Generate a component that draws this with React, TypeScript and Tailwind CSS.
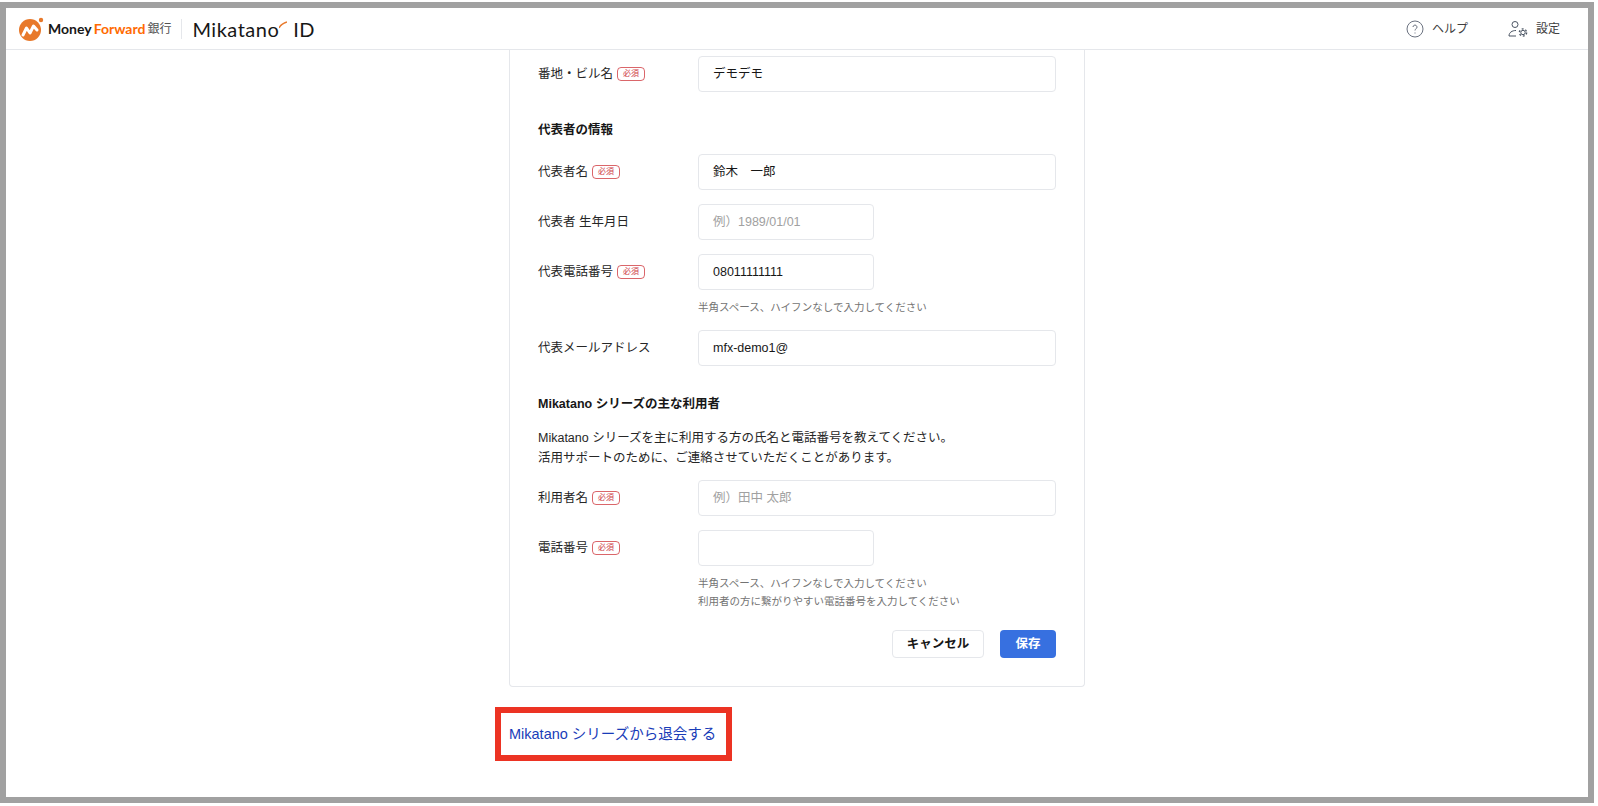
const F = { fontFamily: '"Liberation Sans", "Noto Sans CJK JP", sans-serif' };
const L = { fontFamily: "Lato, sans-serif" };

function Req() {
  return (
    <span className="ml-1 inline-flex h-3.5 w-7 items-center justify-center rounded-sm border border-red-700/60 text-[8px] leading-none text-red-700/80">
      必須
    </span>
  );
}

function Row({ label, req, value, placeholder, short, hint }: { label: string; req?: boolean; value?: string; placeholder?: string; short?: boolean; hint?: string[] }) {
  return (
    <div className="flex">
      <div className="flex h-9 w-40 shrink-0 items-center text-neutral-800">
        {label}
        {req && <Req />}
      </div>
      <div className="flex-1">
        <div className={`flex h-9 items-center rounded border border-gray-200 bg-white px-3.5 ${short ? "w-44" : "w-full"} ${value ? "text-neutral-900" : "text-neutral-400"}`}>
          {value || placeholder}
        </div>
        {hint && (
          <div className="mt-2 text-[10.5px] leading-4.5 text-neutral-500">
            {hint.map((h) => (
              <div key={h}>{h}</div>
            ))}
          </div>
        )}
      </div>
    </div>
  );
}

export default function App() {
  return (
    <div style={F} className="h-screen overflow-hidden bg-white pt-0.5 pr-1">
      <div className="flex h-[801px] flex-col overflow-hidden border-6 border-neutral-400 bg-white">
        <header className="flex h-10.5 shrink-0 items-center justify-between border-b border-gray-200 pr-7 pl-3">
          <div className="flex items-center">
            <svg width="26" height="26" viewBox="0 0 26 26">
              <circle cx="12" cy="14" r="11" fill="#e8792b" />
              <circle cx="23" cy="4" r="2.2" fill="#e8792b" />
              <path d="M5 19l3.5-7 3.5 5 3.5-7 3.5 4" fill="none" stroke="#fff" strokeWidth="3" strokeLinejoin="round" strokeLinecap="round" />
            </svg>
            <span className="ml-1 text-sm font-bold text-neutral-900" style={L}>Money</span>
            <span className="ml-0.5 text-sm font-bold text-orange-500" style={L}>Forward</span>
            <span className="ml-0.5 text-xs text-neutral-600">銀行</span>
            <span className="mx-2.5 h-5 w-px bg-gray-200" />
            <span className="text-xl tracking-wide text-neutral-900" style={L}>Mikatano</span>
            <svg width="8" height="8" viewBox="0 0 8 8" className="-mt-2">
              <path d="M0 7C2 3 5 2 8 1" fill="none" stroke="#e8792b" strokeWidth="1.6" />
            </svg>
            <span className="ml-1.5 text-xl tracking-wide text-neutral-900" style={L}>ID</span>
          </div>
          <div className="flex items-center gap-10 text-xs text-neutral-700">
            <div className="flex items-center gap-2">
              <svg width="18" height="18" viewBox="0 0 18 18" fill="none" stroke="#6b7280">
                <circle cx="9" cy="9" r="8" />
                <path d="M7 7a2 2 0 1 1 3 1.8c-.7.4-1 .8-1 1.7M9 12.5v1" />
              </svg>
              ヘルプ
            </div>
            <div className="flex items-center gap-2">
              <svg width="20" height="18" viewBox="0 0 20 18" fill="none" stroke="#4b5563">
                <circle cx="7" cy="4.5" r="3" />
                <path d="M1 16c0-3.5 3-5.5 7-5.5M1 16h7" />
                <circle cx="15" cy="12.5" r="3.6" strokeWidth="1.4" strokeDasharray="1.9 1.9" />
                <circle cx="15" cy="12.5" r="2.2" />
              </svg>
              設定
            </div>
          </div>
        </header>
        <main className="flex flex-1 flex-col items-center text-[12.5px]">
          <div className="w-144 rounded-b border border-t-0 border-gray-200 bg-white px-7 pt-1.5 pb-7">
            <div className="flex flex-col gap-3.5">
              <Row label="番地・ビル名" req value="デモデモ" />
              <div className="mt-3.5 leading-5 font-bold text-neutral-900">代表者の情報</div>
              <Row label="代表者名" req value="鈴木　一郎" />
              <Row label="代表者 生年月日" placeholder="例）1989/01/01" short />
              <Row label="代表電話番号" req value="08011111111" short hint={["半角スペース、ハイフンなしで入力してください"]} />
              <Row label="代表メールアドレス" value="mfx-demo1@" />
              <div className="mt-3.5 leading-5 font-bold text-neutral-900">Mikatano シリーズの主な利用者</div>
              <p className="-mb-0.5 leading-5 text-neutral-800">
                Mikatano シリーズを主に利用する方の氏名と電話番号を教えてください。
                <br />
                活用サポートのために、ご連絡させていただくことがあります。
              </p>
              <Row label="利用者名" req placeholder="例）田中 太郎" />
              <Row label="電話番号" req short hint={["半角スペース、ハイフンなしで入力してください", "利用者の方に繋がりやすい電話番号を入力してください"]} />
              <div className="mt-1.5 flex justify-end gap-4">
                <button className="h-7 w-23 rounded border border-gray-200 bg-white font-bold text-neutral-900">キャンセル</button>
                <button className="h-7 w-14 rounded bg-[#3770e0] font-bold text-white">保存</button>
              </div>
            </div>
          </div>
          <div className="mt-5 w-144 -translate-x-3.5">
            <div className="w-fit border-6 border-[#ec3323] py-3 pr-2.5 pl-2 text-[14.5px] leading-4.5 text-blue-800">Mikatano シリーズから退会する</div>
          </div>
        </main>
      </div>
    </div>
  );
}
